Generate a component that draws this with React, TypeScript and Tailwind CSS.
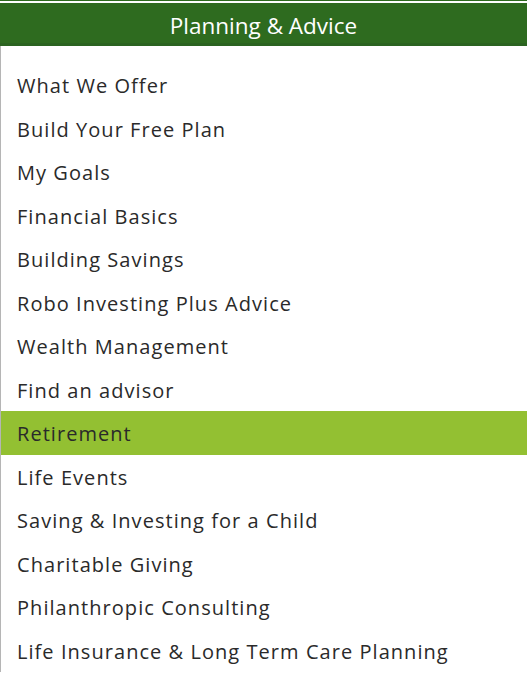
const items = [
  "What We Offer",
  "Build Your Free Plan",
  "My Goals",
  "Financial Basics",
  "Building Savings",
  "Robo Investing Plus Advice",
  "Wealth Management",
  "Find an advisor",
  "Retirement",
  "Life Events",
  "Saving & Investing for a Child",
  "Charitable Giving",
  "Philanthropic Consulting",
  "Life Insurance & Long Term Care Planning",
];

export default function App() {
  return (
    <div className="w-[527px] h-[679px] bg-white overflow-hidden font-['Open_Sans','Lato',sans-serif]">
      <div className="border-t border-[#2e6b1f] pt-[2px]">
        <div className="h-[43px] pt-[5px] bg-[#2e6b1f] border-b-[3px] border-[#2b6320] flex items-center justify-center text-white text-[22.5px]">
          Planning &amp; Advice
        </div>
      </div>
      <ul className="border-l border-[#b5b5b5] pt-[17px]">
        {items.map((item) => (
          <li
            key={item}
            className={
              "h-[43.5px] pt-[3px] flex items-center pl-[16px] text-[20px] tracking-[1.05px] text-[#2a2a2a] " +
              (item === "Retirement" ? "bg-[#93c032] text-[#1c1c1c]" : "")
            }
          >
            {item}
          </li>
        ))}
      </ul>
    </div>
  );
}
